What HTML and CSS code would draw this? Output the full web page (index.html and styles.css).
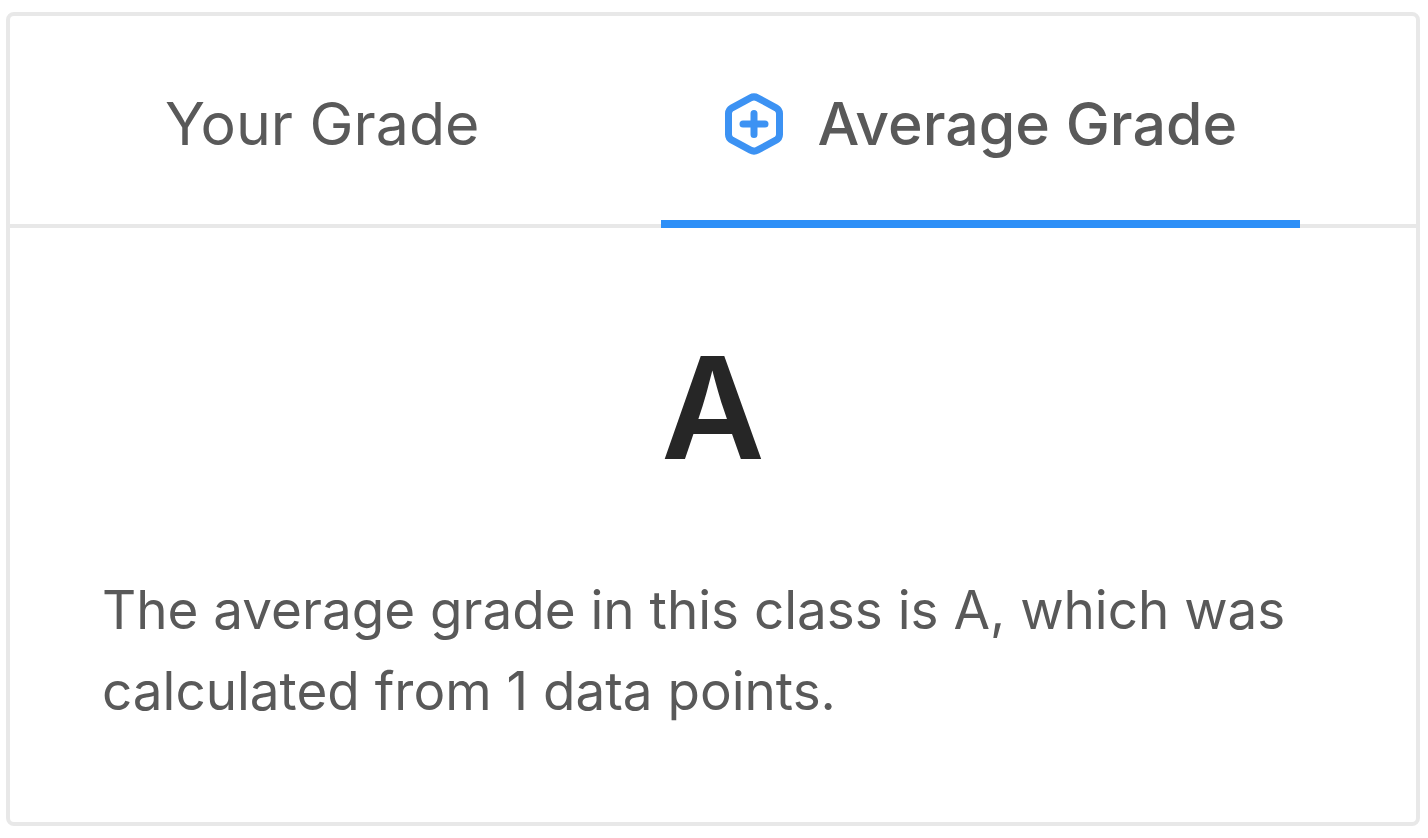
FILE: index.html
```html
<!DOCTYPE html>
<html lang="en">
<head>
<meta charset="utf-8">
<meta name="viewport" content="width=device-width, initial-scale=1">
<title>Average Grade</title>
<link rel="stylesheet" href="styles.css">
</head>
<body>
<main class="card">
  <div class="tabs" role="tablist">
    <button class="tab" type="button" role="tab" id="tab-your" aria-selected="false">Your Grade</button>
    <button class="tab tab-active" type="button" role="tab" id="tab-average" aria-selected="true" aria-controls="panel-average">
      <svg class="tab-icon" viewBox="0 0 60 64" fill="none" stroke="currentColor" stroke-width="7" stroke-linecap="round" stroke-linejoin="round" aria-hidden="true">
        <path d="M26.500 5.800Q30 3.900 33.500 5.800L52 15.800Q55.500 17.800 55.500 21.500V42.500Q55.500 46.200 52 48.200L33.500 58.200Q30 60.100 26.500 58.200L8 48.200Q4.500 46.200 4.500 42.500V21.500Q4.500 17.800 8 15.800Z"/>
        <path d="M30 21.500V42.500M19 32H41"/>
      </svg>
      <span>Average Grade</span>
    </button>
  </div>
  <section class="panel" role="tabpanel" id="panel-average" aria-labelledby="tab-average">
    <h1 class="grade">A</h1>
    <p class="summary">The average grade in this class is A, which was calculated from 1 data points.</p>
  </section>
</main>
</body>
</html>
```
FILE: styles.css
```css
* {
  box-sizing: border-box;
}

body {
  margin: 0;
  padding: 12px 8px 12px 6px;
  background: #fff;
  color: #595959;
  font-family: Inter, "Liberation Sans", sans-serif;
}

.card {
  border: 4px solid #e8e8e8;
  border-radius: 8px;
  background: #fff;
}

.tabs {
  display: flex;
  gap: 119px;
  padding: 0 92px;
  box-shadow: inset 0 -4px #e8e8e8;
}

.tab {
  display: flex;
  align-items: center;
  gap: 33px;
  padding: 66px 63px 54px;
  border: 0;
  border-bottom: 8px solid transparent;
  background: none;
  color: inherit;
  font: 400 59px/84px Inter, "Liberation Sans", sans-serif;
  white-space: nowrap;
  cursor: pointer;
}

.tab-active {
  border-bottom-color: #2d8ff7;
  font-weight: 500;
}

.tab-icon {
  width: 60px;
  height: 64px;
  color: #3c92f3;
}

.panel {
  padding: 80px 92px 90px;
}

.grade {
  margin: 0 0 64px;
  color: #262626;
  font-size: 142px;
  line-height: 198px;
  font-weight: 600;
  text-align: center;
}

.summary {
  margin: 0;
  font-size: 53px;
  line-height: 81px;
}
```
